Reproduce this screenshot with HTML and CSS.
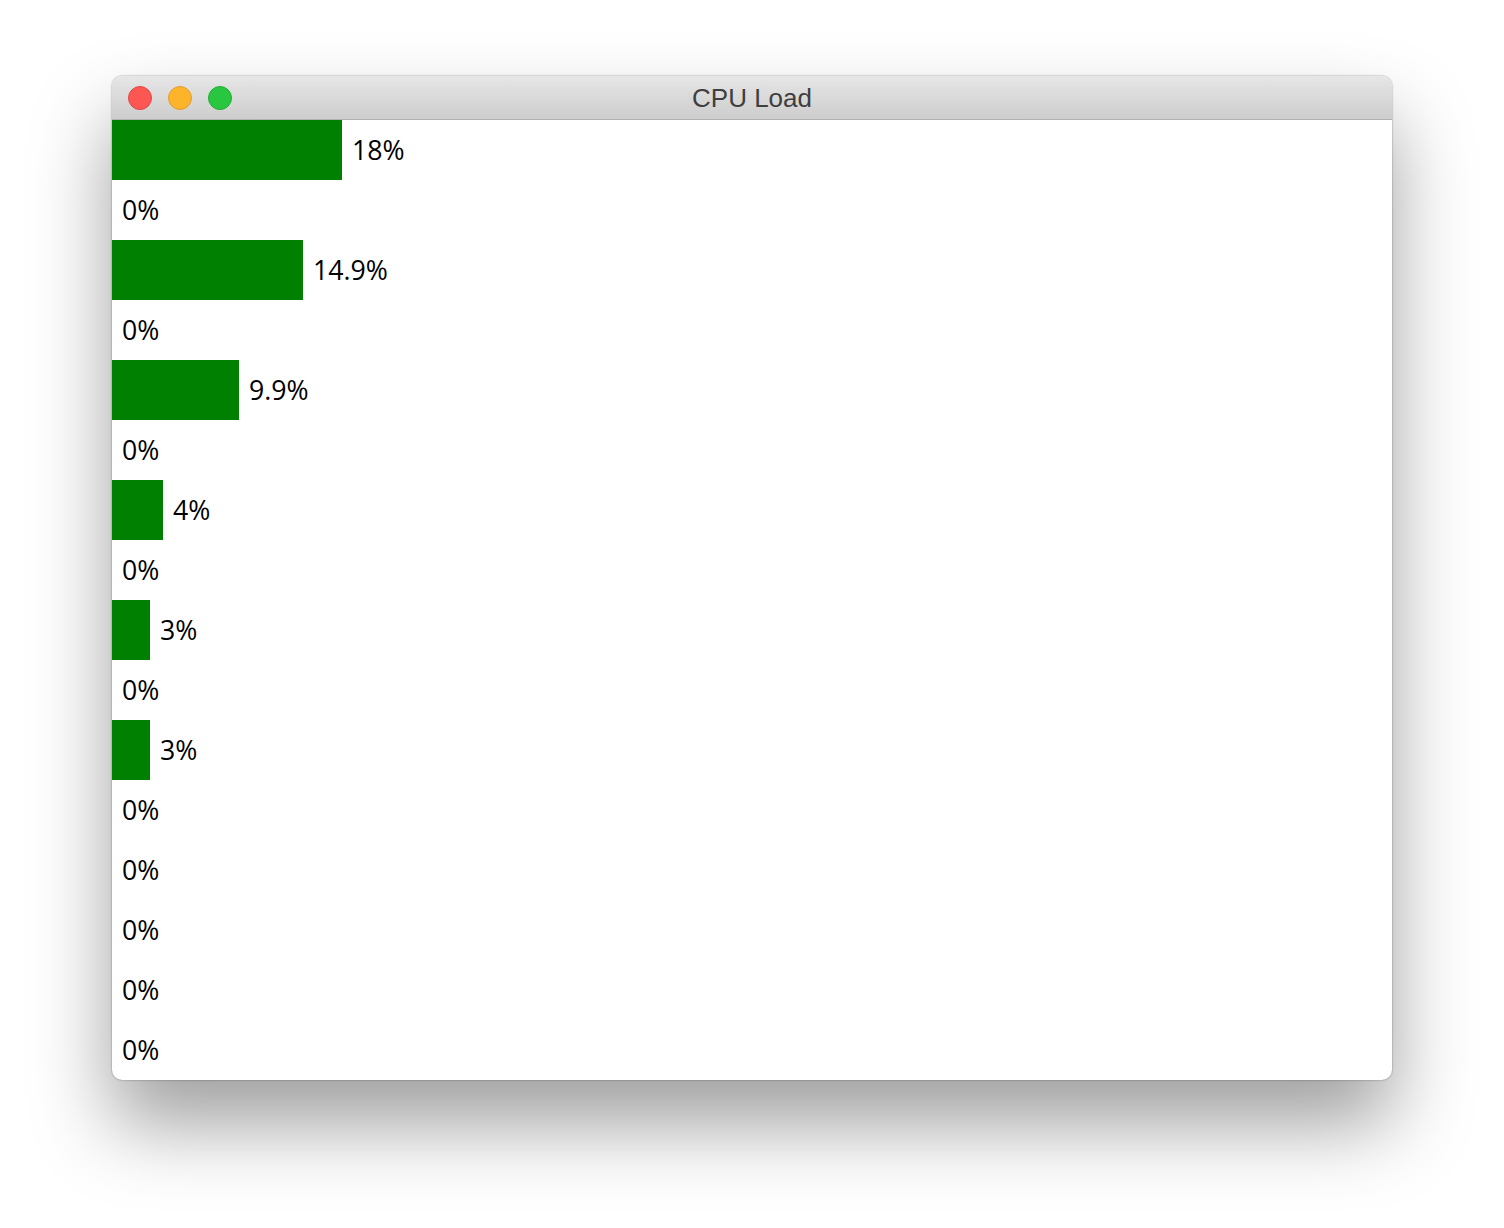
FILE: index.html
```html
<!DOCTYPE html>
<html lang="en">
<head>
    <meta charset="UTF-8">
    <meta name="viewport" content="width=device-width, initial-scale=1.0">
    <title>CPU Load</title>
    <link rel="stylesheet" href="styles.css">
</head>
<body>
    <div class="window">
        <div class="titlebar">
            <div class="lights">
                <span class="light light-close"></span>
                <span class="light light-min"></span>
                <span class="light light-max"></span>
            </div>
            <div class="title">CPU Load</div>
        </div>
        <div class="rows">
            <div class="row"><div class="bar" style="width: 230px"></div><span class="value">18%</span></div>
            <div class="row"><span class="value">0%</span></div>
            <div class="row"><div class="bar" style="width: 191px"></div><span class="value">14.9%</span></div>
            <div class="row"><span class="value">0%</span></div>
            <div class="row"><div class="bar" style="width: 127px"></div><span class="value">9.9%</span></div>
            <div class="row"><span class="value">0%</span></div>
            <div class="row"><div class="bar" style="width: 51px"></div><span class="value">4%</span></div>
            <div class="row"><span class="value">0%</span></div>
            <div class="row"><div class="bar" style="width: 38px"></div><span class="value">3%</span></div>
            <div class="row"><span class="value">0%</span></div>
            <div class="row"><div class="bar" style="width: 38px"></div><span class="value">3%</span></div>
            <div class="row"><span class="value">0%</span></div>
            <div class="row"><span class="value">0%</span></div>
            <div class="row"><span class="value">0%</span></div>
            <div class="row"><span class="value">0%</span></div>
            <div class="row"><span class="value">0%</span></div>
        </div>
    </div>
</body>
</html>
```

FILE: styles.css
```css
body {
    font-family: "Open Sans", Arial, sans-serif;
    background-color: #fff;
    margin: 0;
    padding: 76px 112px 0;
    height: 1228px;
    box-sizing: border-box;
    overflow: hidden;
}

.window {
    width: 1280px;
    border-radius: 10px;
    background-color: #fff;
    box-shadow: 0 0 2px rgba(0, 0, 0, 0.45), 0 44px 80px rgba(0, 0, 0, 0.38);
    overflow: hidden;
}

.titlebar {
    position: relative;
    height: 43px;
    display: flex;
    align-items: center;
    justify-content: center;
    background: linear-gradient(#e6e6e6, #cdcdcd);
    border-bottom: 1px solid #b0b0b0;
}

.lights {
    position: absolute;
    left: 16px;
    top: 10px;
    display: flex;
    gap: 16px;
}

.light {
    width: 24px;
    height: 24px;
    border-radius: 50%;
    box-sizing: border-box;
    border: 1px solid;
}

.light-close {
    background-color: #fc5753;
    border-color: #df4744;
}

.light-min {
    background-color: #fdb32a;
    border-color: #de9f34;
}

.light-max {
    background-color: #28c73f;
    border-color: #27aa35;
}

.title {
    font-family: "Liberation Sans", Arial, sans-serif;
    font-size: 26px;
    color: #3f3f3f;
    padding-top: 2px;
}

.row {
    height: 60px;
    display: flex;
    align-items: center;
    font-size: 26.7px;
    color: #000;
}

.bar {
    height: 60px;
    background-color: #008000;
}

.value {
    margin-left: 10px;
    padding-bottom: 2px;
}
```
